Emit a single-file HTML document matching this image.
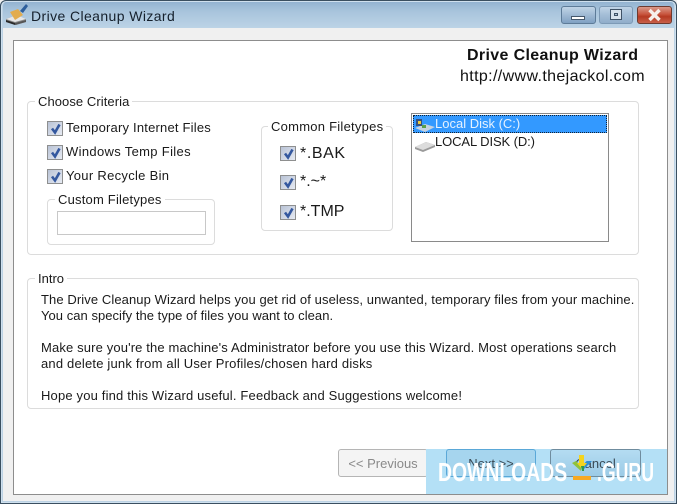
<!DOCTYPE html>
<html><head><meta charset="utf-8"><style>
html,body{margin:0;padding:0;width:677px;height:504px;overflow:hidden;background:#f0f0f0}
*{box-sizing:border-box}
body{position:relative;font-family:"Liberation Sans",sans-serif;font-size:13px;color:#1a1a1a}
.a{position:absolute}
.t{position:absolute;white-space:nowrap;line-height:16px;height:16px}
#title{left:0;top:0;width:677px;height:28px;background:linear-gradient(180deg,#8fb0cf 0,#a8c4dc 40%,#bcd3e6 100%);border-radius:6px 6px 0 0}
#edge{left:0;top:0;width:677px;height:504px;border:1px solid #3a4f60;border-radius:6px 6px 0 0;box-shadow:inset 0 0 0 1px #cfe0ee,inset 2px 0 0 #bcd2e4,inset -2px 0 0 #bcd2e4,inset 0 -2px 0 #bcd2e4}
#panel{left:13px;top:40px;width:655px;height:455px;background:#fff;border:1px solid #8d8d8d}
.g{position:absolute;border:1px solid #dcdcdc;border-radius:4px;background:#fff}
.lg{position:absolute;background:#fff;padding:0 3px;line-height:15px;height:15px;white-space:nowrap}
.cb{position:absolute;width:16px;height:15px;border:1px solid #8e8f8f;background:linear-gradient(135deg,#b9c3d6,#e6eaf2)}
.cb svg{position:absolute;left:1px;top:0}
.btn{position:absolute;height:28px;border-radius:3px;text-align:center;line-height:27px;white-space:nowrap}
.wm{position:absolute;white-space:nowrap;height:28px;line-height:28px;font-size:26px;font-weight:bold;color:#fff;transform-origin:0 0}
</style></head><body>
<div class="a" id="title"></div>
<div class="a" id="panel"></div>
<div class="a" id="edge"></div>

<svg class="a" style="left:5px;top:4px" width="24" height="24" viewBox="0 0 24 24">
<path d="M1 15 L12 11 L21 15 L21 18 L11 21 L1 18Z" fill="#8a8a8a"/>
<path d="M1 15 L10 18 L21 15 L12 11Z" fill="#e6e6e6"/>
<path d="M1 16 L10 19 L10 21 L1 18Z" fill="#2a2a2a"/>
<path d="M10 19 L21 16 L21 18 L10 21Z" fill="#555"/>
<path d="M5 8 L13 5 L18 11 L10 16 Z" fill="#e2ac4e"/>
<path d="M15 7 L21 0 L23 2 L18 9Z" fill="#2e5f9c"/>
</svg>
<div class="t" style="left:31px;top:8px;font-size:14px;color:#15202c;letter-spacing:.4px">Drive Cleanup Wizard</div>

<div class="a" style="left:561px;top:6px;width:35px;height:18px;border:1px solid #5d7b98;border-radius:3px;background:linear-gradient(180deg,#c0d4e6 0,#a0bad4 50%,#7fa0c2 100%)"></div>
<div class="a" style="left:571px;top:16px;width:14px;height:4px;background:#fff;border:1px solid #46586c"></div>
<div class="a" style="left:599px;top:6px;width:34px;height:18px;border:1px solid #7d9ab6;border-radius:3px;background:linear-gradient(180deg,#bfd3e6 0,#a3bdd6 50%,#90adca 100%)"></div>
<div class="a" style="left:610px;top:9px;width:12px;height:11px;border:1px solid #3f5266;background:#d8e2ec"></div>
<div class="a" style="left:614px;top:13px;width:4px;height:3px;border:1px solid #3f5266;background:#a9bed2"></div>
<div class="a" style="left:637px;top:6px;width:35px;height:18px;border:1px solid #6e3a2e;border-radius:3px;background:linear-gradient(180deg,#d99a8a 0,#c8553e 45%,#b63a22 60%,#c8604a 100%)"></div>
<svg class="a" style="left:647px;top:8px" width="15" height="14" viewBox="0 0 15 14"><path d="M2.5 2 L12.5 12 M12.5 2 L2.5 12" stroke="#f6efea" stroke-width="3.4" fill="none"/></svg>

<div class="t" style="left:467px;top:47px;font-size:16px;font-weight:bold;letter-spacing:.35px;height:18px;line-height:18px;color:#111">Drive Cleanup Wizard</div>
<div class="t" style="left:460px;top:68px;font-size:16px;letter-spacing:.37px;height:18px;line-height:18px;color:#111">http://www.thejackol.com</div>

<div class="g" style="left:27px;top:101px;width:612px;height:154px"></div>
<div class="lg" style="left:35px;top:94px;letter-spacing:.07px">Choose Criteria</div>

<div class="cb" style="left:47px;top:121px"><svg width="14" height="13"><path d="M3 6.5 L6 10.5 L10.5 2.5" stroke="#34589f" stroke-width="2.6" fill="none"/></svg></div>
<div class="t" style="left:66px;top:120px;letter-spacing:.2px">Temporary Internet Files</div>
<div class="cb" style="left:47px;top:145px"><svg width="14" height="13"><path d="M3 6.5 L6 10.5 L10.5 2.5" stroke="#34589f" stroke-width="2.6" fill="none"/></svg></div>
<div class="t" style="left:66px;top:144px;letter-spacing:.33px">Windows Temp Files</div>
<div class="cb" style="left:47px;top:169px"><svg width="14" height="13"><path d="M3 6.5 L6 10.5 L10.5 2.5" stroke="#34589f" stroke-width="2.6" fill="none"/></svg></div>
<div class="t" style="left:66px;top:168px;letter-spacing:.3px">Your Recycle Bin</div>

<div class="g" style="left:47px;top:199px;width:168px;height:46px"></div>
<div class="lg" style="left:55px;top:192px;letter-spacing:.2px">Custom Filetypes</div>
<div class="a" style="left:57px;top:211px;width:149px;height:24px;border:1px solid #c8c8c8;background:#fff"></div>

<div class="g" style="left:261px;top:126px;width:132px;height:105px"></div>
<div class="lg" style="left:268px;top:119px;letter-spacing:.25px">Common Filetypes</div>
<div class="cb" style="left:280px;top:146px"><svg width="14" height="13"><path d="M3 6.5 L6 10.5 L10.5 2.5" stroke="#34589f" stroke-width="2.6" fill="none"/></svg></div>
<div class="t" style="left:300px;top:145px;font-size:16px;height:18px;line-height:18px;letter-spacing:.6px">*.BAK</div>
<div class="cb" style="left:280px;top:175px"><svg width="14" height="13"><path d="M3 6.5 L6 10.5 L10.5 2.5" stroke="#34589f" stroke-width="2.6" fill="none"/></svg></div>
<div class="t" style="left:300px;top:173px;font-size:16px;height:18px;line-height:18px">*.~*</div>
<div class="cb" style="left:280px;top:205px"><svg width="14" height="13"><path d="M3 6.5 L6 10.5 L10.5 2.5" stroke="#34589f" stroke-width="2.6" fill="none"/></svg></div>
<div class="t" style="left:300px;top:203px;font-size:16px;height:18px;line-height:18px">*.TMP</div>

<div class="a" style="left:411px;top:113px;width:198px;height:129px;background:#fff;border:1px solid #8a8a8a"></div>
<div class="a" style="left:413px;top:115px;width:194px;height:18px;background:#3399ff;border:1px dotted #123"></div>
<svg class="a" style="left:415px;top:117px" width="20" height="16" viewBox="0 0 20 16"><path d="M0 11 L10 7 L20 10 L10 15Z" fill="#c6d2e0"/><path d="M1 2h6v7H1z" fill="#35507e"/><path d="M3 4h3v3H3z" fill="#e8c840"/><path d="M7 8h4v3H7z" fill="#5aa04a"/></svg>
<div class="t" style="left:435px;top:116px;color:#e4f1ff">Local Disk (C:)</div>
<svg class="a" style="left:415px;top:138px" width="20" height="15" viewBox="0 0 20 15"><path d="M0 9 L11 4 L20 7 L20 9 L8 14 L0 11Z" fill="#9a9a9a"/><path d="M0 9 L11 4 L20 7 L8 12Z" fill="#dcdcdc"/></svg>
<div class="t" style="left:435px;top:134px;letter-spacing:-.1px">LOCAL DISK (D:)</div>

<div class="g" style="left:27px;top:278px;width:612px;height:131px"></div>
<div class="lg" style="left:35px;top:271px">Intro</div>
<div class="t" style="left:41px;top:292px;letter-spacing:.09px">The Drive Cleanup Wizard helps you get rid of useless, unwanted, temporary files from your machine.</div>
<div class="t" style="left:41px;top:308px;letter-spacing:.04px">You can specify the type of files you want to clean.</div>
<div class="t" style="left:41px;top:340px;letter-spacing:.14px">Make sure you're the machine's Administrator before you use this Wizard. Most operations search</div>
<div class="t" style="left:41px;top:356px;letter-spacing:.19px">and delete junk from all User Profiles/chosen hard disks</div>
<div class="t" style="left:41px;top:388px;letter-spacing:.17px">Hope you find this Wizard useful. Feedback and Suggestions welcome!</div>

<div class="btn" style="left:338px;top:449px;width:90px;border:1px solid #b5b5b5;background:#f4f4f4;color:#8a8a8a">&lt;&lt; Previous</div>

<div class="a" style="left:426px;top:449px;width:241px;height:45px;background:#b4e0f6"></div>
<div class="btn" style="left:446px;top:449px;width:90px;border:1px solid #5aa8d8;background:#a6d5ee;color:#3a4a55">Next &gt;&gt;</div>
<div class="btn" style="left:550px;top:449px;width:91px;border:1px solid #6f8c9e;background:linear-gradient(180deg,#b4dcf2,#9ccbe6);color:#3a4a55">Cancel</div>

<div class="wm" style="left:438px;top:458px;transform:scaleX(.745)">DOWNLOADS</div>
<svg class="a" style="left:571px;top:454px" width="22" height="27" viewBox="0 0 22 27"><path d="M1 9 L10 17 L10 12 L5 7Z" fill="#8fc23c"/><path d="M21 7 L11 17 L11 11 L16 7Z" fill="#2c8fd8"/><path d="M8 1h5v8h3l-5 6-5-6h2z" fill="#f4d41e"/><path d="M10 12h3v5h-2z" fill="#2f9a48"/><rect x="2" y="22" width="18" height="4" fill="#f7a823"/></svg>
<div class="wm" style="left:597px;top:458px;transform:scaleX(.68)">.GURU</div>
</body></html>
